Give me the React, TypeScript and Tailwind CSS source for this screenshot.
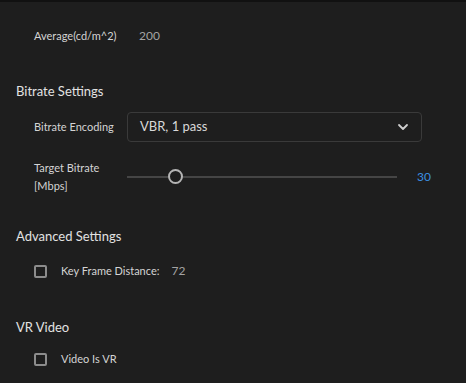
import React from "react";

const font = { fontFamily: "Lato, 'Open Sans', sans-serif" };

function Checkbox() {
  return <div className="w-[13px] h-[13px] border-2 border-[#8c8c8c] rounded-[2px] shrink-0" />;
}

export default function App() {
  return (
    <div className="w-[466px] h-[383px] bg-[#1e1e1e] overflow-hidden flex flex-col" style={font}>
      <div className="h-[2px] bg-[#111111] shrink-0" />
      {/* Average row */}
      <div className="h-[30px] mt-[19px] flex items-center pl-[34px]">
        <div className="w-[93px] text-[11px] text-[#d4d4d4]">Average(cd/m^2)</div>
        <div className="pl-[12px] text-[12px] text-[#a3a3a3]">200</div>
      </div>
      {/* Bitrate Settings */}
      <div className="h-[20px] mt-[31px] flex items-center pl-[16px] text-[13px] text-[#e2e2e2]">Bitrate Settings</div>
      <div className="h-[30px] mt-[10px] flex items-center pl-[34px]">
        <div className="w-[93px] text-[11px] text-[#d4d4d4]">Bitrate Encoding</div>
        <div className="w-[295px] h-[30px] border border-[#3a3a3a] rounded-[4px] bg-[#1e1e1e] flex items-center justify-between pl-[12px] pr-[12px]">
          <span className="text-[13px] text-[#d8d8d8]">VBR, 1 pass</span>
          <svg width="12" height="8" viewBox="0 0 12 8" fill="none">
            <path d="M2 2 L6 6 L10 2" stroke="#cfcfcf" strokeWidth="1.8" strokeLinecap="round" strokeLinejoin="round" />
          </svg>
        </div>
      </div>
      {/* Target bitrate */}
      <div className="h-[36px] mt-[17px] flex items-center pl-[34px]">
        <div className="w-[93px] text-[11px] leading-[18px] text-[#d4d4d4]">
          <div>Target Bitrate</div>
          <div>[Mbps]</div>
        </div>
        <div className="w-[270px] relative h-[16px] flex items-center">
          <div className="h-[2px] w-full bg-[#454545]" />
          <div className="absolute left-[41px] top-0 w-[15px] h-[15px] rounded-full border-2 border-[#b4b4b4] bg-[#1e1e1e]" />
        </div>
        <div className="ml-[20px] text-[12px] text-[#3b8ee0]">30</div>
      </div>
      {/* Advanced */}
      <div className="h-[20px] mt-[32px] flex items-center pl-[16px] text-[13px] text-[#e2e2e2]">Advanced Settings</div>
      <div className="h-[20px] mt-[14px] flex items-center pl-[34px]">
        <Checkbox />
        <span className="ml-[14px] text-[11px] text-[#d4d4d4]">Key Frame Distance:</span>
        <span className="ml-[12px] text-[12px] text-[#a3a3a3]">72</span>
      </div>
      {/* VR */}
      <div className="h-[20px] mt-[37px] flex items-center pl-[16px] text-[13px] text-[#e2e2e2]">VR Video</div>
      <div className="h-[20px] mt-[11px] flex items-center pl-[34px]">
        <Checkbox />
        <span className="ml-[14px] text-[11px] text-[#d4d4d4]">Video Is VR</span>
      </div>
    </div>
  );
}
